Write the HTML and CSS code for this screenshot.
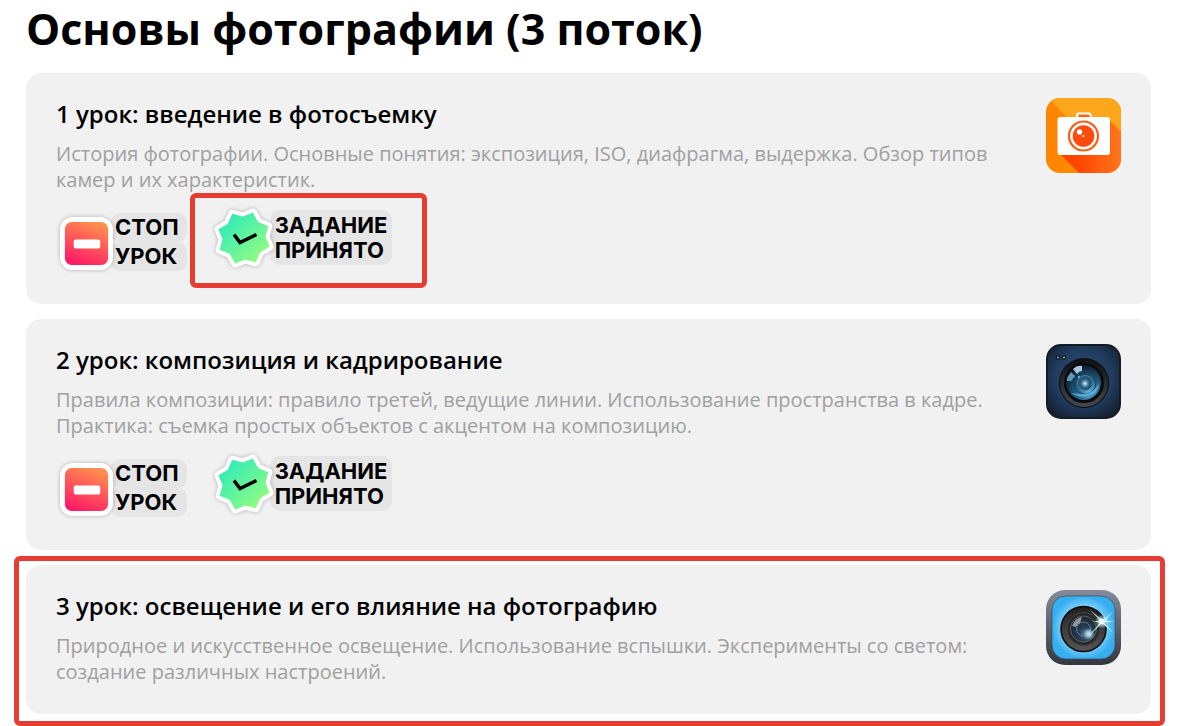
FILE: index.html
```html
<!DOCTYPE html>
<html lang="ru">
<head>
<meta charset="utf-8">
<meta name="viewport" content="width=device-width, initial-scale=1">
<title>Основы фотографии</title>
<link rel="stylesheet" href="styles.css">
</head>
<body>
<svg class="defs" width="0" height="0" aria-hidden="true">
  <defs>
    <linearGradient id="stopFill" x1="0.3" y1="1" x2="0.7" y2="0"><stop offset="0" stop-color="#ff1a66"/><stop offset="1" stop-color="#ff904e"/></linearGradient>
    <linearGradient id="starFill" x1="0.1" y1="0.1" x2="0.85" y2="0.9"><stop offset="0.1" stop-color="#37ecb6"/><stop offset="1" stop-color="#92fc80"/></linearGradient>
    <symbol id="stop" viewBox="0 0 54 54">
      <rect width="54" height="54" rx="13" fill="#fff"/>
      <rect x="5" y="5" width="44" height="44" rx="7" fill="url(#stopFill)"/>
      <rect x="14" y="23" width="27" height="9" rx="2" fill="#fff"/>
    </symbol>
    <symbol id="accepted" viewBox="0 0 64 64">
      <path d="M20.2 7.7 30.7 10.5 40.8 6.5 46.2 15.9 56.3 20.2 53.5 30.7 57.5 40.8 48.1 46.2 43.8 56.3 33.3 53.5 23.2 57.5 17.8 48.1 7.7 43.8 10.5 33.3 6.5 23.2 15.9 17.8Z" fill="url(#starFill)" stroke="#fff" stroke-width="8" stroke-linejoin="round" paint-order="stroke"/>
      <path d="M22 28.500 28 36.500 44.500 28.500" fill="none" stroke="#000" stroke-width="3.500"/>
    </symbol>
  </defs>
</svg>
<main class="course">
  <h1 class="course-title">Основы фотографии (3 поток)</h1>
  <article class="lesson">
    <div class="lesson-body">
      <h2 class="lesson-title">1 урок: введение в фотосъемку</h2>
      <p class="lesson-text">История фотографии. Основные понятия: экспозиция, ISO, диафрагма, выдержка. Обзор типов<br>камер и их характеристик.</p>
      <div class="badges">
        <div class="badge badge-stop">
          <svg class="stop-icon" aria-hidden="true"><use href="#stop"/></svg>
          <p class="stop-label"><span>СТОП</span><span>УРОК</span></p>
        </div>
        <div class="badge badge-accepted">
          <svg class="star-icon" aria-hidden="true"><use href="#accepted"/></svg>
          <p class="accepted-label">ЗАДАНИЕ<br>ПРИНЯТО</p>
          <span class="frame frame-badge"></span>
        </div>
      </div>
    </div>
    <svg class="lesson-icon" viewBox="0 0 75 75" aria-hidden="true">
      <defs>
        <clipPath id="c1"><rect width="75" height="75" rx="14"/></clipPath>
        <linearGradient id="sh1" gradientUnits="userSpaceOnUse" x1="25" y1="60" x2="75" y2="60"><stop offset="0.1" stop-color="#ff4400"/><stop offset="1" stop-color="#ff761a"/></linearGradient>
        <linearGradient id="or1" x1="0" y1="0" x2="1" y2="0"><stop offset="0" stop-color="#ff8500"/><stop offset="1" stop-color="#ff9300"/></linearGradient>
      </defs>
      <g clip-path="url(#c1)">
        <rect width="75" height="75" fill="url(#or1)"/>
        <path d="M5 3 30 28 62 20 75 33V0H0Z" fill="#fba61b"/>
        <path d="M13 55 33 75H75V34L62 21Z" fill="url(#sh1)"/>
      </g>
      <path d="M30 19V17Q30 14.500 32.500 14.500H43Q45.500 14.500 45.500 17V19H61Q64 19 64 22V54Q64 57 61 57H14.500Q11.500 57 11.500 54V22Q11.500 19 14.500 19Z" fill="#fff"/>
      <path d="M33 16.500H43L44 19H32Z" fill="#ff6500"/>
      <circle cx="37.500" cy="38" r="16.500" fill="#fff"/>
      <circle cx="37.500" cy="38" r="14.500" fill="#fff" stroke="#ff5a12" stroke-width="2.200"/>
      <circle cx="37.500" cy="38" r="10.800" fill="#ff4b0b"/>
      <circle cx="33.500" cy="34" r="2.700" fill="#fff"/><circle cx="37.500" cy="38" r="1" fill="#fff"/>
    </svg>
  </article>
  <article class="lesson">
    <div class="lesson-body">
      <h2 class="lesson-title">2 урок: композиция и кадрирование</h2>
      <p class="lesson-text">Правила композиции: правило третей, ведущие линии. Использование пространства в кадре.<br>Практика: съемка простых объектов с акцентом на композицию.</p>
      <div class="badges">
        <div class="badge badge-stop">
          <svg class="stop-icon" aria-hidden="true"><use href="#stop"/></svg>
          <p class="stop-label"><span>СТОП</span><span>УРОК</span></p>
        </div>
        <div class="badge badge-accepted">
          <svg class="star-icon" aria-hidden="true"><use href="#accepted"/></svg>
          <p class="accepted-label">ЗАДАНИЕ<br>ПРИНЯТО</p>
        </div>
      </div>
    </div>
    <svg class="lesson-icon" viewBox="0 0 75 75" aria-hidden="true">
      <defs>
        <radialGradient id="bg2" cx="0.5" cy="0.45" r="0.65"><stop offset="0" stop-color="#2d5580"/><stop offset="0.6" stop-color="#203c5e"/><stop offset="1" stop-color="#141f30"/></radialGradient>
        <radialGradient id="gl2" cx="0.65" cy="0.75" r="0.75"><stop offset="0" stop-color="#62b9e4"/><stop offset="0.45" stop-color="#266286"/><stop offset="1" stop-color="#0b1a29"/></radialGradient>
        <linearGradient id="ri2" x1="0" y1="0" x2="0" y2="1"><stop offset="0" stop-color="#101114"/><stop offset="1" stop-color="#45464a"/></linearGradient>
        <radialGradient id="sp2"><stop offset="0" stop-color="#e6ffff"/><stop offset="1" stop-color="#67a4b8" stop-opacity="0"/></radialGradient>
      </defs>
      <rect x="1" y="1" width="73" height="73" rx="14" fill="url(#bg2)" stroke="#151b26" stroke-width="2"/>
      <circle cx="12" cy="13.500" r="2.200" fill="#101820"/><circle cx="18" cy="13.500" r="2.200" fill="#101820"/>
      <circle cx="12" cy="13.500" r="1.100" fill="#58abc2"/><circle cx="18" cy="13.500" r="1.100" fill="#a6a95d"/>
      <circle cx="38" cy="39" r="25" fill="#0b0c0f"/>
      <circle cx="38" cy="39" r="22" fill="none" stroke="url(#ri2)" stroke-width="4"/>
      <circle cx="38" cy="38.500" r="19" fill="#08090c"/>
      <circle cx="37.500" cy="38.500" r="17.500" fill="url(#gl2)"/>
      <circle cx="39" cy="39" r="11" fill="none" stroke="#153e5a"/><circle cx="39" cy="39" r="7.500" fill="#235778" stroke="#3f7fa3"/>
      <path d="M27 25Q31 21 36 22L36 27Q33 27 31 30Z" fill="#b9def0" opacity="0.9"/>
      <path d="M21 34 25 28 29 32 25 37 21 37Z" fill="#7fbbdd" opacity="0.75"/>
      <path d="M25 49Q36 57 50 48Q53 44 53 39Q47 51 34 50Z" fill="#64bbe5" opacity="0.65"/>
      <circle cx="39" cy="39.500" r="5" fill="url(#sp2)"/><circle cx="33" cy="33" r="1.200" fill="#54a9d6"/>
    </svg>
  </article>
  <article class="lesson">
    <div class="lesson-body">
      <h2 class="lesson-title">3 урок: освещение и его влияние на фотографию</h2>
      <p class="lesson-text">Природное и искусственное освещение. Использование вспышки. Эксперименты со светом:<br>создание различных настроений.</p>
    </div>
    <svg class="lesson-icon" viewBox="0 0 75 75" aria-hidden="true">
      <defs>
        <linearGradient id="fr3" x1="0" y1="0" x2="0" y2="1"><stop offset="0" stop-color="#858b9b"/><stop offset="1" stop-color="#34373e"/></linearGradient>
        <radialGradient id="bl3"><stop offset="0.6" stop-color="#8bd7ff"/><stop offset="1" stop-color="#37aeef"/></radialGradient>
        <linearGradient id="le3" x1="0" y1="0" x2="0" y2="1"><stop offset="0" stop-color="#202020"/><stop offset="1" stop-color="#565656"/></linearGradient>
        <radialGradient id="gl3" cx="0.6" cy="0.7" r="0.7"><stop offset="0" stop-color="#61839c"/><stop offset="0.4" stop-color="#243d55"/><stop offset="1" stop-color="#202327"/></radialGradient>
        <radialGradient id="sp3"><stop offset="0" stop-color="#fff"/><stop offset="0.35" stop-color="#dff" stop-opacity="0.8"/><stop offset="1" stop-color="#bff" stop-opacity="0"/></radialGradient>
      </defs>
      <rect width="75" height="75" rx="19" fill="url(#fr3)"/>
      <rect x="6" y="6" width="63" height="63" rx="14" fill="url(#bl3)" stroke="#344f66" stroke-width="0.700"/>
      <circle cx="37.500" cy="39" r="22.500" fill="url(#le3)" stroke="#080808" stroke-width="1.500"/>
      <circle cx="37.500" cy="39" r="16.500" fill="#292929" stroke="#454545"/>
      <circle cx="37.500" cy="39" r="13" fill="url(#gl3)" stroke="#5b6065"/>
      <circle cx="37.500" cy="39" r="7" fill="none" stroke="#5681a2"/>
      <path d="M26 36Q29 28 36 27L34 33Q31 34 30 37Z" fill="#b6bdc3" opacity="0.75"/>
      <circle cx="43" cy="44" r="6" fill="url(#sp3)" opacity="0.8"/>
      <circle cx="56" cy="31.500" r="7" fill="url(#sp3)"/>
      <path d="M44 20 57 30.500 67 21 58 32 67 43 56 33 42 47 55 31.500ZM46 31.500 56 30.500 69 31.500 56 32.500Z" fill="#d9ffff" opacity="0.85"/>
      <circle cx="56" cy="31.500" r="2.500" fill="#fff"/>
    </svg>
    <span class="frame frame-lesson"></span>
  </article>
</main>
</body>
</html>
```
FILE: styles.css
```css
* {
  box-sizing: border-box;
}

body {
  margin: 0;
  background: #fff;
  color: #000;
  font-family: "Open Sans", "Noto Sans", sans-serif;
}

h1, h2, p {
  margin: 0;
}

.defs {
  position: absolute;
}

.course {
  display: flex;
  flex-direction: column;
  gap: 15px;
  padding: 0 33px 12px 26px;
}

.course-title {
  font-size: 43px;
  line-height: 58px;
  font-weight: 700;
}

.lesson {
  position: relative;
  display: flex;
  justify-content: space-between;
  align-items: flex-start;
  gap: 24px;
  padding: 25px 30px 29px;
  border-radius: 15px;
  background: #f1f1f1;
}

.lesson-title {
  margin-bottom: 12px;
  font-size: 24px;
  line-height: 31px;
  font-weight: 600;
}

.lesson-text {
  color: #a0a0a0;
  font-size: 20px;
  line-height: 26px;
}

.lesson-icon {
  flex: none;
  width: 75px;
  height: 75px;
}

.badges {
  display: flex;
  align-items: flex-start;
  gap: 25px;
  padding: 13px 0 4px 4px;
}

.badge {
  position: relative;
  display: flex;
  font-family: Inter, "Open Sans", sans-serif;
  font-size: 22px;
  font-weight: 700;
}

.badge-stop {
  padding-top: 7px;
}

.stop-icon {
  z-index: 1;
  width: 53px;
  height: 53px;
  margin-top: 4px;
  overflow: visible;
  filter: drop-shadow(0 0 2px #0004);
}

.stop-label {
  display: flex;
  flex-direction: column;
  margin-left: -2px;
  line-height: 29px;
}

.stop-label span {
  padding: 0 8px 0 4px;
  border-radius: 9px;
  background: #e5e5e5;
}

.star-icon {
  z-index: 1;
  width: 64px;
  height: 64px;
  overflow: visible;
  filter: drop-shadow(0 0 2px #0004);
}

.accepted-label {
  align-self: flex-start;
  margin: 4px 0 0 -6px;
  padding: 3px 5px 2px 5px;
  border-radius: 10px;
  background: #e5e5e5;
  line-height: 25px;
}

.frame {
  position: absolute;
  border: 5px solid #e63c32;
  border-radius: 6px;
  pointer-events: none;
}

.frame-badge {
  inset: -13px -35px -18px -22px;
}

.frame-lesson {
  inset: -9px -14px -12px -12px;
}
```
